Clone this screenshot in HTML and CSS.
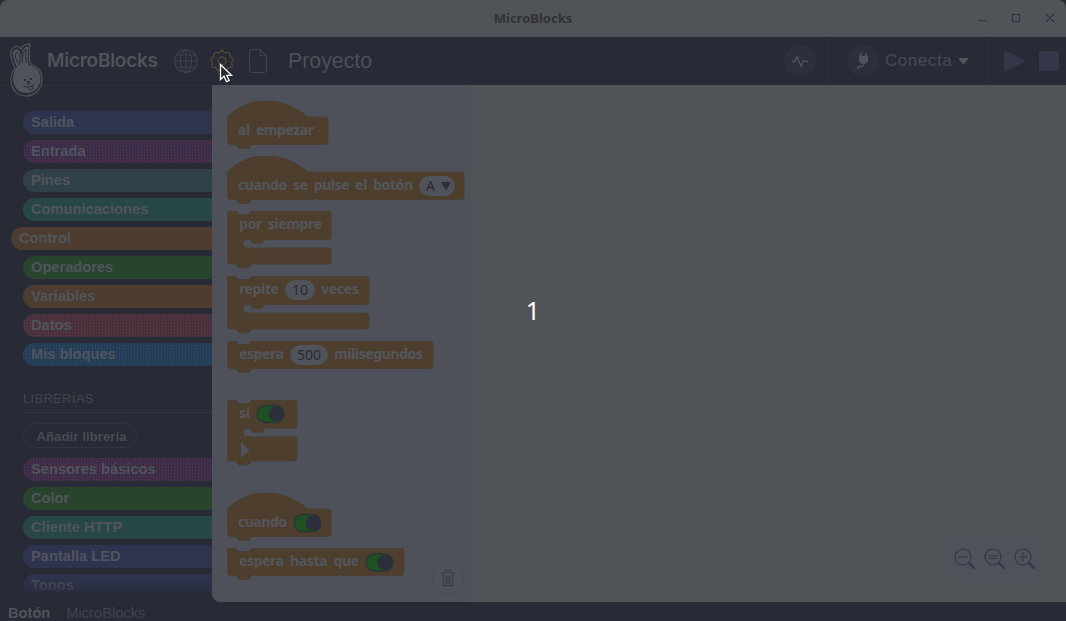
FILE: index.html
```html
<!DOCTYPE html>
<html lang="es">
<head>
<meta charset="utf-8">
<title>MicroBlocks</title>
<link rel="stylesheet" href="styles.css">
</head>
<body>
<div class="window">
  <div class="titlebar">
    <span class="title">MicroBlocks</span>
    <svg class="controls" width="80" height="14" viewBox="0 0 80 14"><path d="M1 9.500h8M35.500 3.500h7v7h-7zM69 3l8 8M77 3l-8 8"/></svg>
  </div>
  <header class="toolbar">
    <svg class="rabbit" width="36" height="56" viewBox="0 0 36 56">
      <path class="halo" d="M6 26C2 19 0 9 4 6c3-3 6-2 8 1 1-4 5-5 9-5-1 6-1 11 0 19l2 2c7 2 10 7 10 14 0 10-7 17-16 17S2 47 2 38c0-5 1-8 4-12z"/>
      <path class="face" d="M8 25C4 18 2.500 10 5.500 8c3-2 5 0 6 4l1 6c0-7 1-13 7-14-1 6-1 13 0 19 8 1 12 7 12 14 0 8-6 14-14 14S4 45 4 37c0-5 1-8 4-12z"/>
      <path class="detail" d="M10.500 23C6 17 5 12 8 10c3 3 3 8 3 12M13.500 21c0-6 0-11 3.500-14-.5 5-.5 10 .5 14M18 40l1.500 2.500L21 40M14 44c5 2 9 1 11-2M20 46c0 4 5 2 4-2"/>
      <path class="eyes" d="M15 37h2v2h-2zM21 36h2v2h-2zM18 39h3l-1.500 2z"/>
    </svg>
    <span class="brand">MicroBlocks</span>
    <svg class="icon globe" width="26" height="26" viewBox="0 0 26 26"><circle cx="13" cy="13" r="11.300"/><ellipse cx="13" cy="13" rx="5.500" ry="11.300"/><path d="M13 2v22M2 13h22M4 7h18M4 19h18"/></svg>
    <svg class="icon gear" width="26" height="26" viewBox="0 0 26 26"><path d="M11 4.200Q13 .2 15 4.200q.8 1 2 .6 4.300-1.400 3.900 2.500-.1 1.500 1 2.100 4 1.600 1.300 4.100-1 1.100-.4 2.300 1.500 3.800-2.400 3.500-1.400 0-1.900 1.400-1.400 3.700-3.800.9-1.700-1.500-3.400 0-2.400 2.800-3.800-.9-.5-1.400-1.900-1.400-3.900.3-2.400-3.500.6-1.200-.4-2.300-2.700-2.500 1.300-4.100 1.100-.6 1-2.100-.4-3.900 3.900-2.500 1.200.4 2-.6z"/><circle cx="13" cy="13" r="4"/></svg>
    <svg class="icon file" width="20" height="26" viewBox="0 0 20 26"><path d="M4 1.500h8l6.500 6.500v13q0 3.500-3 3.500h-11Q1.500 24.500 1.500 21V4.500Q1.500 1.500 4 1.500zM12 1.500V5q0 3 3 3h3.500"/></svg>
    <span class="project">Proyecto</span>
    <span class="spacer"></span>
    <div class="round"><svg width="20" height="16" viewBox="0 0 20 16"><path class="pulse" d="M2 8.500h3l2-5 4 10 2.500-6 1.500 1h3"/></svg></div>
    <div class="connect">
      <div class="round"><svg width="20" height="20" viewBox="0 0 20 20"><path class="plug" d="M7 2h1.500v3H12V2h1.500v3H15v4q0 3-3.500 4h-2Q6 12 6 9V5h1z"/><path class="cord" d="M10.500 12q1 3-3 3.500-3 0-3 2.500"/></svg></div>
      <span class="connect-label">Conecta</span>
      <svg width="12" height="8" viewBox="0 0 12 8"><path class="plug" d="M2 1h7q2 0 1 1.500L6.500 6.500q-1 1-2 0l-3.500-4Q0 1 2 1z"/></svg>
    </div>
    <svg class="run" width="56" height="24" viewBox="0 0 56 24"><path d="M0 3.500Q0 1 2.500 2l17 8.500q1.500 1.500 0 3L2.500 22Q0 23 0 20.500z"/><rect x="35" y="2" width="20" height="20" rx="1.500"/></svg>
  </header>
  <main class="main">
    <nav class="sidebar">
      <div class="cat blue">Salida</div>
      <div class="cat pink">Entrada</div>
      <div class="cat slate">Pines</div>
      <div class="cat teal">Comunicaciones</div>
      <div class="cat orange selected">Control</div>
      <div class="cat green">Operadores</div>
      <div class="cat orange">Variables</div>
      <div class="cat red">Datos</div>
      <div class="cat sky">Mis bloques</div>
      <div class="lib-head">LIBRERÍAS</div>
      <div class="add-lib">Añadir librería</div>
      <div class="cat pink">Sensores básicos</div>
      <div class="cat green">Color</div>
      <div class="cat teal">Cliente HTTP</div>
      <div class="cat blue">Pantalla LED</div>
      <div class="cat blue last">Tonos</div>
    </nav>
    <section class="palette">
      <svg width="0" height="0" class="defs"><defs>
        <pattern id="grain" width="4" height="4" patternUnits="userSpaceOnUse"><rect width="4" height="4" fill="#4f3e2e"/><path d="M0 0h1v1H0zM2 2h1v1H2z" fill="#41402c"/><path d="M2 0h1v1H2zM0 2h1v1H0z" fill="#533d2e"/></pattern>
        <pattern id="grain-green" width="4" height="4" patternUnits="userSpaceOnUse"><rect width="4" height="4" fill="#1d5522"/><path d="M0 0h1v1H0zM2 2h1v1H2z" fill="#27352f"/></pattern>
      </defs></svg>
      <svg class="block" width="240" height="49" viewBox="0 0 240 49">
        <path d="M.5 16C20-4.800 54-6.500 81 16H98q3 0 3 3V40.500q0 3-3 3H25l-3 3.500q-1 .5-2 .5h-7q-1 0-1.500-.5l-2.500-3.500H3.500q-3 0-3-3z"/>
        <text x="11" y="34" textLength="76">al empezar</text>
      </svg>
      <svg class="block gap6" width="240" height="49" viewBox="0 0 240 49">
        <path d="M.5 16C20-4.800 54-6.500 81 16H234q3 0 3 3V40.500q0 3-3 3H25l-3 3.500q-1 .5-2 .5h-7q-1 0-1.500-.5l-2.500-3.500H3.500q-3 0-3-3z"/>
        <text x="11" y="34" textLength="175">cuando se pulse el botón</text>
        <rect class="slot" x="192" y="20" width="36" height="20" rx="10"/><text class="value" x="199" y="34.500">A</text><path class="arrow" d="M214 26h10l-5 8.500z"/>
      </svg>
      <svg class="block gap6" width="240" height="58" viewBox="0 .5 240 58">
        <path d="M3.500.5H9l2.500 3.500h10.500l2.500-3.500H101q3 0 3 3V26q0 3-3 3H38.500l-3 3.500q-1 .5-2 .5h-6q-1 0-2-.5L22.500 29H19.500q-3.500 0-3.500 4t3.500 4.500H101q3 0 3 3V50.500q0 3-3 3H25l-3 3.500q-1 .5-2 .5h-7q-1 0-1.500-.5L9 53.500H3.500q-3 0-3-3V3.500q0-3 3-3z"/>
        <text x="12" y="18.500" textLength="83">por siempre</text>
      </svg>
      <svg class="block gap7" width="240" height="58" viewBox="0 .5 240 58">
        <path d="M3.500.5H9l2.500 3.500h10.500l2.500-3.500H139q3 0 3 3V26q0 3-3 3H38.500l-3 3.500q-1 .5-2 .5h-6q-1 0-2-.5L22.500 29H19.500q-3.500 0-3.500 4t3.500 4.500H139q3 0 3 3V50.500q0 3-3 3H25l-3 3.500q-1 .5-2 .5h-7q-1 0-1.500-.5L9 53.500H3.500q-3 0-3-3V3.500q0-3 3-3z"/>
        <text x="12" y="18.500" textLength="40">repite</text><rect class="slot" x="58" y="4.500" width="30" height="20" rx="10"/><text class="value" x="65" y="19">10</text><text x="94" y="18.500" textLength="38">veces</text>
      </svg>
      <svg class="block gap7" width="240" height="33" viewBox="0 .5 240 33">
        <path d="M3.500.5H9l2.500 3.500h10.500l2.500-3.500H203q3 0 3 3V25q0 3-3 3H25l-3 3.500q-1 .5-2 .5h-7q-1 0-1.500-.5L9 28H3.500q-3 0-3-3V3.500q0-3 3-3z"/>
        <text x="12" y="18.500" textLength="45">espera</text><rect class="slot" x="63" y="4.500" width="38" height="20" rx="10"/><text class="value" x="70" y="19">500</text><text x="107" y="18.500" textLength="89">milisegundos</text>
      </svg>
      <svg class="block gap26" width="240" height="66" viewBox="0 .5 240 66">
        <path d="M3.500.5H9l2.500 3.500h10.500l2.500-3.500H67q3 0 3 3V26q0 3-3 3H38.500l-3 3.500q-1 .5-2 .5h-6q-1 0-2-.5L22.500 29H20q-4 0-4 4.250t4 4H67q3 0 3 3V58.500q0 3-3 3H25l-3 3.500q-1 .5-2 .5h-7q-1 0-1.500-.5L9 61.500H3.500q-3 0-3-3V3.500q0-3 3-3z"/>
        <text x="12" y="18.500">si</text><rect class="toggle" x="30" y="6" width="27" height="17" rx="8.500"/><circle class="knob" cx="49" cy="14.500" r="7.500"/><path class="expand" d="M14 42.500l8.500 8-8.500 8z"/>
      </svg>
      <svg class="block gap27" width="240" height="49" viewBox="0 0 240 49">
        <path d="M.5 16C20-4.800 54-6.500 81 16H101q3 0 3 3V40.500q0 3-3 3H25l-3 3.500q-1 .5-2 .5h-7q-1 0-1.500-.5l-2.500-3.500H3.500q-3 0-3-3z"/>
        <text x="11" y="34" textLength="49">cuando</text><rect class="toggle" x="67" y="21.500" width="27" height="17" rx="8.500"/><circle class="knob" cx="86" cy="30" r="7.500"/>
      </svg>
      <svg class="block gap5" width="240" height="33" viewBox="0 .5 240 33">
        <path d="M3.500.5H9l2.500 3.500h10.500l2.500-3.500H174q3 0 3 3V25q0 3-3 3H25l-3 3.500q-1 .5-2 .5h-7q-1 0-1.500-.5L9 28H3.500q-3 0-3-3V3.500q0-3 3-3z"/>
        <text x="12" y="18.500" textLength="120">espera hasta que</text><rect class="toggle" x="139" y="6.500" width="27" height="17" rx="8.500"/><circle class="knob" cx="158" cy="15" r="7.500"/>
      </svg>
      <div class="trash"><svg width="16" height="20" viewBox="0 0 16 20"><path d="M1.500 4.500h13M5.500 4V2h5v2M3 5l1 12.500h8L13 5M6 7.500l.3 8M8 7.500v8M10 7.500l-.3 8"/></svg></div>
    </section>
    <section class="workspace">
      <div class="zoom">
        <svg width="24" height="26" viewBox="0 0 24 26"><circle cx="10" cy="10" r="8"/><path d="M5.500 10h9"/><path class="handle" d="M16 16l5 5"/></svg>
        <svg width="24" height="26" viewBox="0 0 24 26"><circle cx="10" cy="10" r="8"/><path d="M5.500 9h9M5.500 11.500h9"/><path class="handle" d="M16 16l5 5"/></svg>
        <svg width="24" height="26" viewBox="0 0 24 26"><circle cx="10" cy="10" r="8"/><path d="M5.500 10h9M10 5.500v9"/><path class="handle" d="M16 16l5 5"/></svg>
      </div>
    </section>
  </main>
  <footer class="status"><b>Botón</b><span>MicroBlocks</span></footer>
  <div class="countdown">1</div>
  <svg class="cursor" width="16" height="22" viewBox="0 0 16 22"><path d="M1.500 1.500v15l3.500-3.300 2.500 5.500 2.700-1.200-2.400-5.200h4.700z"/></svg>
</div>
</body>
</html>
```

FILE: styles.css
```css
* { box-sizing: border-box; }
body { margin: 0; background: #282a36; font-family: "Liberation Sans", Arial, sans-serif; }
svg { display: block; flex: none; }
.window { position: relative; width: 1066px; height: 621px; overflow: hidden; display: flex; flex-direction: column; }
.titlebar { height: 37px; flex: none; background: #505357; border-radius: 8px 8px 0 0; border-bottom: 1px solid #4b4e52; display: grid; grid-template-columns: 1fr auto 1fr; align-items: center; }
.title { grid-column: 2; font: bold 13px "Noto Sans", sans-serif; color: #303238; }
.controls { justify-self: end; margin-right: 9px; fill: none; stroke: #303340; stroke-width: 1.1; }
.toolbar { height: 48px; flex: none; display: flex; align-items: center; color: #50535a; background: repeating-conic-gradient(#272936 0 25%, #292b37 0 50%) 0 0 / 2px 2px; }
.rabbit { margin: 5px 2px 0 9px; align-self: flex-start; height: 56px; position: relative; z-index: 1; }
.halo { fill: #282a36; stroke: #505359; stroke-width: 1.2; }
.face { fill: #505359; }
.detail { fill: none; stroke: #282a36; stroke-width: 1; }
.eyes { fill: #282a36; }
.brand { width: 110px; font: 600 19px Inter, sans-serif; letter-spacing: -.27px; white-space: nowrap; padding-bottom: 1px; }
.icon { fill: none; stroke: #3e4150; stroke-width: 1.1; }
.globe { margin-left: 16px; }
.gear { margin-left: 10px; stroke: #514b30; stroke-width: 1.3; }
.file { margin-left: 13px; }
.project { margin-left: 20px; font-size: 21.3px; color: #4c4f57; }
.spacer { flex: 1; }
.round { width: 32px; height: 32px; border-radius: 50%; background: #2d303c; display: grid; place-items: center; flex: none; }
.pulse, .cord { fill: none; stroke: #505359; stroke-width: 1.4; stroke-linejoin: round; }
.plug { fill: #505359; }
.connect { height: 48px; margin-left: 11px; width: 162px; border: solid #2d2f3b; border-width: 0 1px; padding-left: 19px; display: flex; align-items: center; }
.connect-label { font-size: 17px; letter-spacing: .55px; margin: 0 6px 0 6px; color: #484c54; }
.run { margin-left: 15px; margin-right: 6px; fill: #343747; }
.main { height: 517px; flex: none; display: flex; }
.sidebar { width: 212px; padding: 25px 0 0 23px; display: flex; flex-direction: column; flex: none; overflow: hidden; border-top: 1px solid #2e303c; }
.cat { height: 23px; flex: none; margin-bottom: 6px; padding-left: 8px; border-radius: 12px 0 0 12px; font: bold 14.67px/22px "Liberation Sans", sans-serif; color: #51545c; white-space: nowrap; }
.selected { margin-left: -12px; }
.blue { background: repeating-conic-gradient(#2c3150 0 25%, #31364f 0 50%) 0 0 / 2px 2px; }
.pink { background: conic-gradient(#582c42 0 25%, #28304a 0 50%, #482c50 0 75%, #28304a 0) 0 0 / 3px 3px; }
.slate { background: #304049; }
.teal { background: repeating-conic-gradient(#264542 0 25%, #284a46 0 50%) 0 0 / 2px 2px; }
.orange { background: repeating-conic-gradient(#4a3c30 0 25%, #503d2f 0 50%) 0 0 / 2px 2px; }
.green { background: #29442c; }
.red { background: conic-gradient(#642f3d 0 25%, #33343e 0 50%, #5b303d 0 75%, #33383c 0) 0 0 / 3px 3px; }
.sky { background: conic-gradient(#26355c 0 25%, #24424d 0 50%, #294164 0 75%, #244950 0) 0 0 / 3px 3px; }
.last { -webkit-mask-image: linear-gradient(#000, #0008 60%, transparent 95%); mask-image: linear-gradient(#000, #0008 60%, transparent 95%); }
.lib-head { height: 41px; flex: none; border-bottom: 1px solid #303541; padding-top: 19px; font-size: 13px; line-height: 15px; letter-spacing: .3px; color: #41454e; }
.add-lib { width: 114px; height: 25px; flex: none; margin: 10px 0; border: 1px solid #303541; border-radius: 13px; text-align: center; font: bold 13px/25px "Liberation Sans", sans-serif; letter-spacing: .13px; color: #484b54; padding-left: 3px; white-space: nowrap; }
.palette { position: relative; width: 259px; flex: none; background: #4e5159; border-bottom-left-radius: 8px; padding: 16px 0 0 15px; }
.defs { position: absolute; }
.block > path:first-child { fill: url(#grain); stroke: #494237; stroke-width: 1; }
.block text { font: 700 14px "Noto Sans", sans-serif; word-spacing: 3px; fill: #53565c; }
.block .value { font: 14px "Noto Sans", sans-serif; fill: #282a36; }
.gap5 { margin-top: 6px; }
.gap6 { margin-top: 6px; }
.gap7 { margin-top: 7px; }
.gap26 { margin-top: 26px; }
.gap27 { margin-top: 27px; }
.slot, .expand { fill: #505359; }
.arrow, .knob { fill: #2c2e3b; }
.toggle { fill: url(#grain-green); stroke: #293638; stroke-width: 1.3; }
.trash { position: absolute; right: 7px; bottom: 8px; width: 32px; height: 32px; border: 1px solid #484c51; border-radius: 50%; display: grid; place-items: center; }
.trash path { fill: none; stroke: #363947; stroke-width: 1.1; }
.workspace { flex: 1; background: #505357; display: flex; align-items: flex-end; justify-content: flex-end; padding: 0 23px 24px 0; }
.zoom { width: 96px; height: 37px; display: flex; gap: 6px; padding: 6px 0 0 6px; border-radius: 5px; background: #4f525a; }
.zoom svg { fill: none; stroke: #353845; stroke-width: 1.2; }
.zoom .handle { stroke-width: 2.4; stroke-linecap: round; }
.status { flex: none; height: 19px; display: flex; gap: 16px; padding: 4px 0 0 8px; font-size: 14.67px; line-height: 15px; color: #51545b; }
.status span { color: #41454f; }
.countdown { position: absolute; left: 0; right: 0; top: 292px; text-align: center; font: 25px/36px "Noto Sans", sans-serif; color: #fff; }
.cursor { position: absolute; left: 219px; top: 63px; fill: #26282d; stroke: #fff; stroke-width: 1.3; z-index: 2; }
```
